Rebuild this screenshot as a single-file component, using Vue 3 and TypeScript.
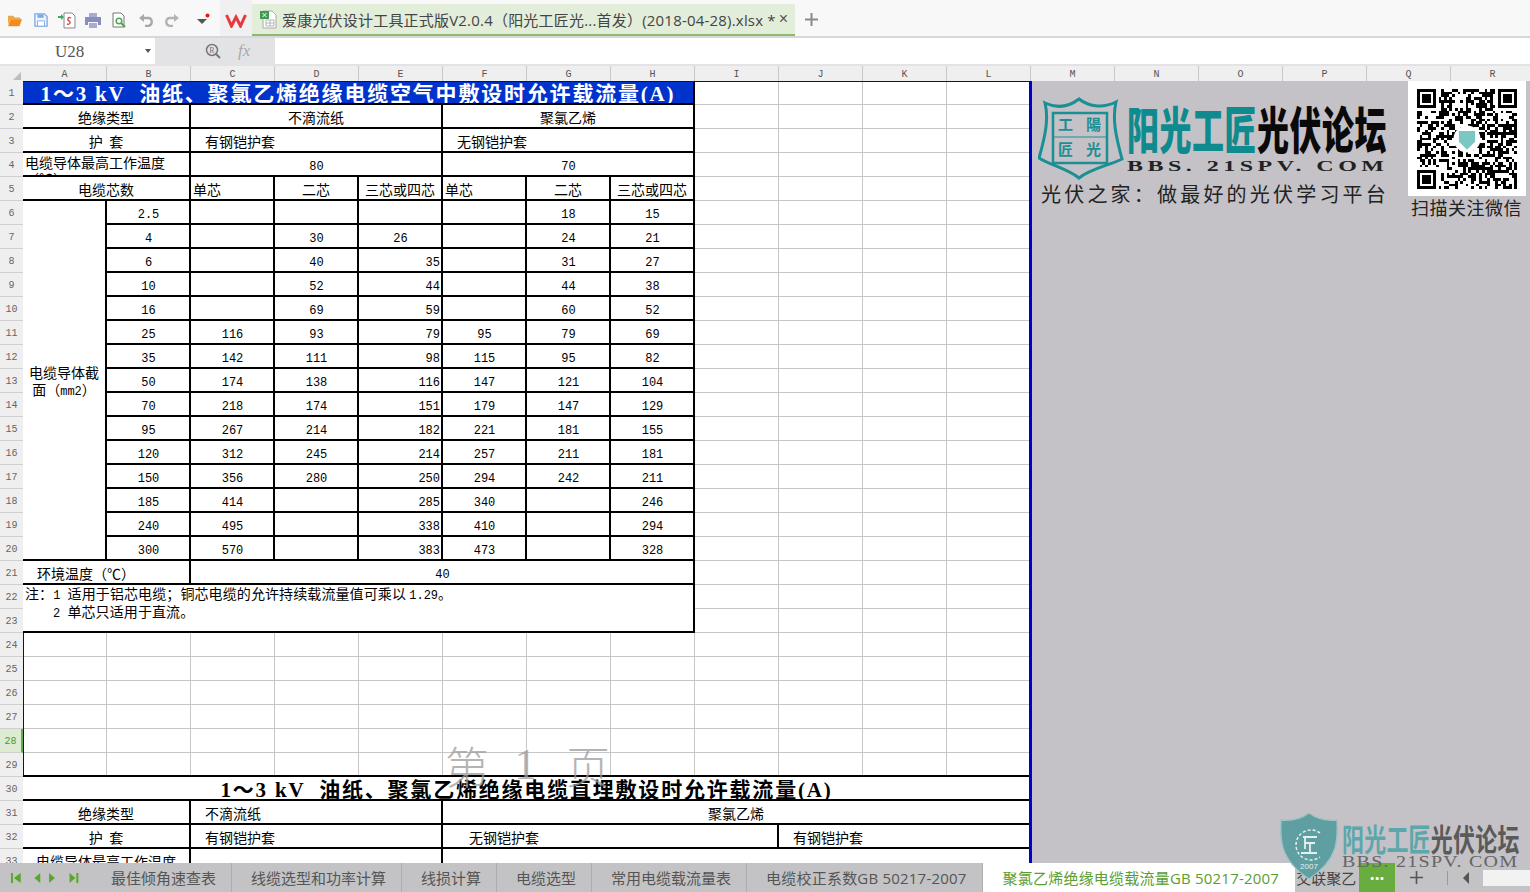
<template>
  <div class="app">
    <!-- title bar -->
    <div class="titlebar">
      <div class="quick">
        <svg class="ico" width="16" height="14" viewBox="0 0 18 16"><path d="M1 3h6l1.500 2H15v2H4L1 13z" fill="#e9a94a"/><path d="M4 7h13l-3 8H1z" fill="#f28a1c"/></svg>
        <svg class="ico" width="14" height="14" viewBox="0 0 16 16"><path d="M1 1h11l3 3v11H1z" fill="#eef4fd" stroke="#7ea9e6" stroke-width="1.500"/><path d="M4 1.500h7v4H4z" fill="#7ea9e6"/><path d="M4 9h8v6H4z" fill="#fff" stroke="#7ea9e6"/></svg>
        <svg class="ico" width="18" height="17" viewBox="0 0 18 17"><path d="M6 1h8l3 3v12H6z" fill="#fff" stroke="#888"/><path d="M13 6c-3-2-4 2-2 3s1 4-2 3" fill="none" stroke="#d9534f" stroke-width="1.500"/><path d="M0 4h3V2l3 3-3 3V6H0z" fill="#41a85f"/></svg>
        <svg class="ico" width="16" height="15" viewBox="0 0 16 15"><path d="M4 0h8v4H4z" fill="#a9abd4"/><path d="M0 4h16v8h-3V9H3v3H0z" fill="#8a8dbf"/><path d="M4 10h8v5H4z" fill="#a9abd4"/></svg>
        <svg class="ico" width="14" height="16" viewBox="0 0 14 16"><path d="M1 1h8l3 3v11H1z" fill="#fff" stroke="#777"/><circle cx="7" cy="9" r="2.800" fill="none" stroke="#4fa64f" stroke-width="1.500"/><path d="M9 11l4 4" stroke="#4fa64f" stroke-width="2"/></svg>
        <svg class="ico" width="14" height="14" viewBox="0 0 14 14"><path d="M3 5h6c5 0 5 7 0 8H6" fill="none" stroke="#a8a8a8" stroke-width="2.400"/><path d="M0 5l5-4v8z" fill="#a8a8a8"/></svg>
        <svg class="ico" width="14" height="14" viewBox="0 0 14 14"><path d="M11 5H5c-5 0-5 7 0 8h3" fill="none" stroke="#b4b4b4" stroke-width="2.400"/><path d="M14 5L9 1v8z" fill="#b4b4b4"/></svg>
        <span class="vsep"></span>
        <svg class="ico" width="16" height="14" viewBox="0 0 16 14"><path d="M1 6h10L6 11z" fill="#555"/><circle cx="11.500" cy="2.500" r="2" fill="#e8141c"/></svg>
      </div>
      <div class="wps">
        <svg width="22" height="15" viewBox="0 0 22 15"><path d="M1.500 2l5 11 4.500-9 4.500 9 5-11" fill="none" stroke="#e6393f" stroke-width="3"/></svg>
      </div>
      <div class="filetab">
        <svg width="17" height="19" viewBox="0 0 17 19"><path d="M3 1h9l4 4v13H3z" fill="#fff" stroke="#aaa"/><path d="M6 10h8v6H6z" fill="none" stroke="#b5b5b5"/><path d="M6 13h8M10 10v6" stroke="#b5b5b5"/><path d="M0 1h9v8H0z" fill="#3f9c4f"/><path d="M2.500 3l4 4M6.500 3l-4 4" stroke="#fff"/></svg>
        <span class="filename">爱康光伏设计工具正式版V2.0.4（阳光工匠光...首发）(2018-04-28).xlsx *</span>
        <span class="tabclose">×</span>
      </div>
      <svg class="newtab" width="15" height="15" viewBox="0 0 15 15"><path d="M7.500 1v13M1 7.500h13" stroke="#8a8a8a" stroke-width="2"/></svg>
    </div>

    <!-- formula bar -->
    <div class="formula">
      <div class="namebox"><span>U28</span><i class="caret"></i></div>
      <div class="fxtools">
        <svg width="16" height="16" viewBox="0 0 16 16"><circle cx="7" cy="7" r="5.500" fill="none" stroke="#777" stroke-width="1.500"/><path d="M11 11l4 4" stroke="#777" stroke-width="2"/><text x="7" y="10" class="rmark">R</text></svg>
        <span class="fx">fx</span>
      </div>
      <div class="fxinput"></div>
    </div>

    <!-- column headers -->
    <div class="colhead">
      <div class="corner"><i></i></div>
      <div v-for="c in columns" :key="c" class="colname">{{ c }}</div>
    </div>

    <div class="body">
      <div class="rowhead">
        <div v-for="r in 33" :key="r" class="rowname" :class="{ cur: r === 28 }">{{ r }}</div>
      </div>
      <div class="page">
        <div
          v-for="(cell, i) in cells"
          :key="i"
          class="cell"
          :class="[cell.cls, 'al-' + (cell.a || 'c')]"
          :style="{ gridColumn: cell.c + ' / span ' + (cell.cs || 1), gridRow: cell.r + ' / span ' + (cell.rs || 1) }"
        >{{ cell.t }}</div>
        <div class="cell section">
          <div>电缆导体截<br />面（<span class="num">mm2</span>）</div>
        </div>
        <div class="cell note">
          <div class="noteline">注：<span class="num">1 </span>适用于铝芯电缆；铜芯电缆的允许持续载流量值可乘以 <span class="num">1.29</span>。</div>
          <div class="noteline note2"><span class="num">2 </span>单芯只适用于直流。</div>
        </div>
        <div class="pagemark"><span>第</span><span class="pm1">1</span><span>页</span></div>
      </div>
      <div class="outside"></div>

      <!-- forum banner sitting on the sheet -->
      <div class="banner">
        <div class="bannertop">
          <svg class="shield" width="86" height="83" viewBox="0 0 86 83">
            <path d="M7 6C20 12 32 9 41 2 50 9 64 12 78 5 74 22 78 40 84 62 72 68 52 72 41 81 30 72 12 68 1 61 7 40 11 22 7 6Z" fill="none" stroke="#1a8f94" stroke-width="3"/>
            <path d="M15 16h54v50H15z" fill="none" stroke="#1a8f94" stroke-width="2.500"/>
            <path d="M15 40h54" stroke="#1a8f94" stroke-width="1"/>
            <text x="20" y="33" class="shieldtxt">工</text><text x="48" y="33" class="shieldtxt">陽</text>
            <text x="20" y="58" class="shieldtxt">匠</text><text x="48" y="58" class="shieldtxt">光</text>
          </svg>
          <div class="brand">
            <div class="brandname"><span class="teal">阳光工匠</span><span>光伏论坛</span></div>
            <div class="brandurl">BBS. 21SPV. COM</div>
          </div>
        </div>
        <div class="slogan">光伏之家：做最好的光伏学习平台</div>
      </div>
      <div class="qrbox">
        <div class="qrcard">
          <svg width="100" height="100" :viewBox="'0 0 ' + qrSize + ' ' + qrSize" shape-rendering="crispEdges">
            <rect v-for="(m, i) in qr" :key="i" :x="m[0]" :y="m[1]" width="1" height="1" fill="#000"/>
            <circle :cx="qrSize / 2" :cy="qrSize / 2" r="5" fill="#fff" shape-rendering="auto"/>
            <path :d="qrLogo" fill="#7cc7c4" shape-rendering="auto"/>
          </svg>
        </div>
        <div class="qrlabel">扫描关注微信</div>
      </div>
    </div>

    <!-- sheet tabs -->
    <div class="tabs">
      <div class="nav">
        <svg width="84" height="12" viewBox="0 0 84 12" fill="#5aa62b">
          <path d="M11 1v10l-7-5zM1 1h2v10H1z"/><path d="M31 1v10l-6-5z"/><path d="M40 1v10l6-5z"/><path d="M61 1v10l6-5zM68 1h2v10h-2z"/>
        </svg>
      </div>
      <div v-for="t in sheetTabs" :key="t" class="sheettab" :class="{ wide: t.includes('GB') }">{{ t }}</div>
      <div class="sheettab active wide">聚氯乙烯绝缘电缆载流量GB 50217-2007</div>
      <div class="clipped">交联聚乙</div>
      <div class="more">···</div>
      <svg class="addsheet" width="15" height="15" viewBox="0 0 15 15"><path d="M7.500 1v13M1 7.500h13" stroke="#555" stroke-width="1.600"/></svg>
      <span class="tabsep"></span>
      <svg class="tabscroll" width="8" height="12" viewBox="0 0 8 12"><path d="M7 0v12L1 6z" fill="#555"/></svg>
      <div class="hscroll"></div>
    </div>

    <!-- watermark stamped over the window -->
    <div class="stamp">
      <svg width="60" height="66" viewBox="0 0 60 66">
        <path d="M2 7C12 8 22 6 30 0 38 6 48 8 58 7 59 26 60 46 30 66 0 46 1 26 2 7Z" fill="#5f9ea1" stroke="#9dc3c5" stroke-width="1.500"/>
        <path d="M41 20a15 15 0 1 0 0 24" fill="none" stroke="#e6f0f0" stroke-width="1.500" stroke-dasharray="3 2"/>
        <path d="M24 24h14M26 24v12M26 30h10M31 30v10M22 40h16" fill="none" stroke="#e6f0f0" stroke-width="1.800"/>
        <text x="30" y="56" class="stampyear">2007</text>
      </svg>
      <div class="stamptext">
        <div class="stampname"><span class="st1">阳光工匠</span><span class="st2">光伏论坛</span></div>
        <div class="stampurl">BBS. 21SPV. COM</div>
      </div>
    </div>
  </div>
</template>

<script setup lang="ts">
interface Cell {
  c: number
  r: number
  cs?: number
  rs?: number
  t: string
  a?: 'l' | 'c' | 'r'
  cls?: string
}

const columns = 'ABCDEFGHIJKLMNOPQR'.split('')

const sheetTabs = ['最佳倾角速查表', '线缆选型和功率计算', '线损计算', '电缆选型', '常用电缆载流量表', '电缆校正系数GB 50217-2007']

const sizes: [string, string[]][] = [
  ['2.5', ['', '', '', '', '18', '15']],
  ['4', ['', '30', '26', '', '24', '21']],
  ['6', ['', '40', '35', '', '31', '27']],
  ['10', ['', '52', '44', '', '44', '38']],
  ['16', ['', '69', '59', '', '60', '52']],
  ['25', ['116', '93', '79', '95', '79', '69']],
  ['35', ['142', '111', '98', '115', '95', '82']],
  ['50', ['174', '138', '116', '147', '121', '104']],
  ['70', ['218', '174', '151', '179', '147', '129']],
  ['95', ['267', '214', '182', '221', '181', '155']],
  ['120', ['312', '245', '214', '257', '211', '181']],
  ['150', ['356', '280', '250', '294', '242', '211']],
  ['185', ['414', '', '285', '340', '', '246']],
  ['240', ['495', '', '338', '410', '', '294']],
  ['300', ['570', '', '383', '473', '', '328']],
]

const cells: Cell[] = [
  { c: 1, r: 1, cs: 8, t: '1～3 kV  油纸、聚氯乙烯绝缘电缆空气中敷设时允许载流量(A)', cls: 'title blue' },
  { c: 1, r: 2, cs: 2, t: '绝缘类型' },
  { c: 3, r: 2, cs: 3, t: '不滴流纸' },
  { c: 6, r: 2, cs: 3, t: '聚氯乙烯' },
  { c: 1, r: 3, cs: 2, t: '护  套' },
  { c: 3, r: 3, cs: 3, t: '有钢铠护套', a: 'l', cls: 'ind' },
  { c: 6, r: 3, cs: 3, t: '无钢铠护套', a: 'l', cls: 'ind' },
  { c: 1, r: 4, cs: 2, t: '电缆导体最高工作温度（℃）', a: 'l', cls: 'wrap' },
  { c: 3, r: 4, cs: 3, t: '80', cls: 'num' },
  { c: 6, r: 4, cs: 3, t: '70', cls: 'num' },
  { c: 1, r: 5, cs: 2, t: '电缆芯数' },
  { c: 3, r: 5, t: '单芯', a: 'l' },
  { c: 4, r: 5, t: '二芯' },
  { c: 5, r: 5, t: '三芯或四芯' },
  { c: 6, r: 5, t: '单芯', a: 'l' },
  { c: 7, r: 5, t: '二芯' },
  { c: 8, r: 5, t: '三芯或四芯' },
  { c: 1, r: 21, cs: 2, t: '环境温度（℃）', a: 'l', cls: 'ind' },
  { c: 3, r: 21, cs: 6, t: '40', cls: 'num' },
  { c: 1, r: 30, cs: 12, t: '1～3 kV  油纸、聚氯乙烯绝缘电缆直埋敷设时允许载流量(A)', cls: 'title second' },
  { c: 1, r: 31, cs: 2, t: '绝缘类型' },
  { c: 3, r: 31, cs: 3, t: '不滴流纸', a: 'l', cls: 'ind' },
  { c: 6, r: 31, cs: 7, t: '聚氯乙烯' },
  { c: 1, r: 32, cs: 2, t: '护  套' },
  { c: 3, r: 32, cs: 3, t: '有钢铠护套', a: 'l', cls: 'ind' },
  { c: 6, r: 32, cs: 4, t: '无钢铠护套', a: 'l', cls: 'ind2' },
  { c: 10, r: 32, cs: 3, t: '有钢铠护套', a: 'l', cls: 'ind' },
  { c: 1, r: 33, cs: 2, t: '电缆导体最高工作温度', cls: 'plain33' },
  { c: 3, r: 33, cs: 3, t: '' },
  { c: 6, r: 33, cs: 7, t: '' },
]

sizes.forEach(([size, vals], i) => {
  const r = 6 + i
  cells.push({ c: 2, r, t: size, cls: 'num' })
  vals.forEach((v, j) => {
    const right = j === 2 && v !== '26'
    cells.push({ c: 3 + j, r, t: v, cls: 'num', a: right ? 'r' : 'c' })
  })
})

// QR code look-alike, modules come from a small LFSR
const qrSize = 37
const qr: [number, number][] = []
let seed = 0x2f6e2b1

const nextBit = () => {
  seed ^= seed << 13
  seed ^= seed >>> 17
  seed ^= seed << 5
  return seed & 1
}

const inFinder = (x: number, y: number) => {
  const n = qrSize
  return (x < 8 && y < 8) || (x >= n - 8 && y < 8) || (x < 8 && y >= n - 8)
}

const finderOn = (x: number, y: number) => {
  const d = Math.max(Math.abs(x - 3), Math.abs(y - 3))
  return d === 3 || d <= 1
}

for (let y = 0; y < qrSize; y++) {
  for (let x = 0; x < qrSize; x++) {
    const b = nextBit()
    if (inFinder(x, y)) {
      const fx = x >= qrSize - 8 ? x - (qrSize - 7) : x
      const fy = y >= qrSize - 8 ? y - (qrSize - 7) : y
      if (fx >= 0 && fy >= 0 && fx < 7 && fy < 7 && finderOn(fx, fy)) qr.push([x, y])
    } else if (b) {
      qr.push([x, y])
    }
  }
}

const mid = qrSize / 2
const qrLogo = `M${mid - 3} ${mid - 3}h6v4l-3 3-3-3z`
</script>

<style>
html,
body {
  margin: 0;
  background: #c4c2c6;
}
</style>

<style scoped>
.app {
  position: relative;
  width: 1530px;
  height: 892px;
  overflow: hidden;
  display: flex;
  flex-direction: column;
  font-family: "Liberation Serif", "Noto Sans CJK SC", serif;
  color: #000;
}

.titlebar {
  height: 36px;
  border-bottom: 2px solid #d8d8dc;
  background: #f8f8f8;
  display: flex;
  align-items: stretch;
  flex: none;
}

.quick {
  position: relative;
  width: 220px;
  flex: none;
  display: flex;
  align-items: center;
  padding: 4px 0 0 7px;
  box-sizing: border-box;
}

.ico {
  margin-right: 11px;
  flex: none;
}

.ico:nth-of-type(2) { margin-right: 10px; }
.ico:nth-of-type(3) { margin-right: 9px; }
.ico:nth-of-type(5) { margin-right: 13px; }
.ico:nth-of-type(6) { margin-right: 12px; }
.ico:nth-of-type(7) { margin-right: 8px; }

.vsep {
  width: 1px;
  height: 28px;
  background: #d0d0d0;
  margin-right: 9px;
}

.wps {
  width: 32px;
  background: #f0f0f0;
  display: flex;
  align-items: center;
  justify-content: center;
  padding-top: 4px;
  box-sizing: border-box;
}

.filetab {
  margin-top: 4px;
  width: 543px;
  background: #e2edda;
  border-bottom: 2px solid #8cbb6e;
  box-sizing: border-box;
  display: flex;
  align-items: center;
  padding-left: 8px;
  flex: none;
}

.filename {
  margin-left: 5px;
  font-family: "Open Sans", "Noto Sans CJK SC", sans-serif;
  font-size: 15px;
  color: #444;
  white-space: nowrap;
  letter-spacing: 0.2px;
}

.tabclose {
  margin-left: 3px;
  font-family: "Liberation Sans", sans-serif;
  font-size: 16px;
  color: #555;
}

.newtab {
  align-self: center;
  margin: 3px 0 0 9px;
}

.formula {
  height: 28px;
  flex: none;
  background: #e3e3e5;
  box-sizing: border-box;
  padding-bottom: 2px;
  display: flex;
}

.namebox {
  width: 155px;
  background: #fff;
  position: relative;
  font-size: 17px;
  color: #555;
  font-family: "Liberation Serif", serif;
  display: flex;
  align-items: center;
  padding: 2px 0 0 55px;
  box-sizing: border-box;
}

.caret {
  position: absolute;
  left: 145px;
  top: 11px;
  border: 3px solid transparent;
  border-top: 4px solid #555;
}

.fxtools {
  width: 120px;
  display: flex;
  align-items: center;
  padding-left: 50px;
  box-sizing: border-box;
}

.rmark {
  font-size: 8px;
  text-anchor: middle;
  fill: #777;
}

.fx {
  margin-left: 17px;
  font-style: italic;
  font-size: 17px;
  color: #aaa;
  font-family: "Liberation Serif", serif;
}

.fxinput {
  flex: 1;
  background: #fff;
}

.colhead {
  height: 15px;
  flex: none;
  display: flex;
  background: #efefef;
}

.corner {
  width: 23px;
  position: relative;
  flex: none;
}

.corner i {
  position: absolute;
  right: 2px;
  bottom: 1px;
  border-style: solid;
  border-width: 0 0 8px 8px;
  border-color: transparent transparent #bcbcbc transparent;
}

.colname {
  width: 84px;
  flex: none;
  box-sizing: border-box;
  border-right: 1px solid #c8c8c8;
  text-align: center;
  font-size: 10px;
  line-height: 17px;
  color: #555;
  font-family: "Liberation Mono", monospace;
  overflow: hidden;
}

.body {
  flex: 1;
  min-height: 0;
  position: relative;
  display: flex;
  overflow: hidden;
}

.rowhead {
  width: 23px;
  flex: none;
  background: #efefef;
}

.rowname {
  height: 24px;
  box-sizing: border-box;
  border-bottom: 1px solid #cfcfcf;
  text-align: center;
  line-height: 25px;
  font-size: 10px;
  font-family: "Liberation Mono", monospace;
  color: #666;
}

.rowname.cur {
  background: #dcebd2;
  border-right: 2px solid #6aa84f;
  color: #4b9a2e;
}

.page {
  position: relative;
  width: 1009px;
  flex: none;
  display: grid;
  grid-template-columns: repeat(12, 84px);
  grid-template-rows: repeat(33, 24px);
  background-color: #fff;
  background-image:
    repeating-linear-gradient(to right, transparent 0 83px, #c6c6c6 83px 84px),
    repeating-linear-gradient(to bottom, transparent 0 23px, #c6c6c6 23px 24px);
  box-shadow: inset 1px 1px 0 #0000c8;
}

.page::after {
  content: "";
  position: absolute;
  top: 0;
  bottom: 0;
  right: 0;
  width: 3px;
  background: #0000c8;
}

.outside {
  flex: 1;
  background: #c4c2c6;
}

.cell {
  box-sizing: border-box;
  background: #fff;
  border-right: 2px solid #000;
  border-bottom: 2px solid #000;
  font-family: "Noto Sans CJK SC", sans-serif;
  font-size: 14px;
  line-height: 20px;
  padding-top: 2px;
  overflow: hidden;
  white-space: pre;
  min-width: 0;
}

.al-l { text-align: left; padding-left: 2px; }
.al-c { text-align: center; }
.al-r { text-align: right; padding-right: 1px; }

.ind { padding-left: 14px; }
.ind2 { padding-left: 26px; }

.num {
  font-family: "Liberation Mono", monospace;
  font-size: 12px;
}

.cell.num {
  padding-top: 4px;
}

.cell.num.al-c {
  padding-left: 1px;
}

.wrap {
  white-space: normal;
  line-height: 16px;
  padding-top: 1px;
}

.section {
  grid-column: 1;
  grid-row: 6 / span 15;
  white-space: nowrap;
  display: flex;
  align-items: center;
  justify-content: center;
  text-align: center;
  line-height: 17px;
  padding: 4px 0 0;
}

.plain33 {
  line-height: 24px;
  padding-top: 0;
}

.title {
  font-family: "Liberation Serif", "Noto Sans CJK SC", serif;
  font-weight: 700;
  font-size: 21px;
  line-height: 24px;
  padding-top: 0;
  letter-spacing: 1.8px;
}

.blue {
  background: #0033cc;
  color: #fff;
  margin-top: 1px;
}

.second {
  box-shadow: 0 -2px 0 #000;
  padding-top: 1px;
  overflow: hidden;
  border-right: none;
  margin-right: 1px;
}

.note {
  grid-column: 1 / span 8;
  grid-row: 22 / span 2;
  padding: 0 0 0 2px;
  font-size: 14px;
}

.noteline {
  height: 18px;
  line-height: 17px;
  letter-spacing: 0.1px;
}

.noteline .num {
  letter-spacing: 0;
}

.note2 {
  padding-left: 28px;
}

.pagemark {
  position: absolute;
  left: 422px;
  top: 654px;
  width: 165px;
  display: flex;
  justify-content: space-between;
  font-family: "Noto Sans CJK SC", sans-serif;
  font-weight: 300;
  font-size: 44px;
  line-height: 60px;
  color: #9c9c9c;
  opacity: 0.75;
}

.pm1 {
  font-family: "Liberation Serif", serif;
  margin-left: -4px;
}

.banner {
  position: absolute;
  left: 1038px;
  top: 16px;
  width: 356px;
}

.bannertop {
  display: flex;
  gap: 3px;
}

.shield {
  flex: none;
}

.shieldtxt {
  font-family: "Noto Sans CJK SC", sans-serif;
  font-weight: 700;
  font-size: 15px;
  fill: #1a8f94;
}

.brand {
  padding-top: 4px;
}

.brandname {
  font-family: "Noto Sans CJK SC", sans-serif;
  font-weight: 900;
  font-size: 32px;
  line-height: 52px;
  height: 52px;
  white-space: nowrap;
  color: #0a0a0a;
  transform: scaleY(1.55);
  transform-origin: 50% 50%;
  letter-spacing: 0.5px;
}

.teal {
  color: #0f8a8f;
}

.brandurl {
  margin-top: 6px;
  font-family: "Liberation Serif", serif;
  font-weight: 700;
  font-size: 15px;
  line-height: 15px;
  letter-spacing: 2.800px;
  color: #222;
  white-space: nowrap;
  transform: scaleX(1.6);
  transform-origin: 0 50%;
}

.slogan {
  margin: 2px 0 0 3px;
  font-family: "Noto Sans CJK SC", sans-serif;
  font-size: 20px;
  line-height: 24px;
  letter-spacing: 3.200px;
  color: #222;
  white-space: nowrap;
}

.qrbox {
  position: absolute;
  left: 1408px;
  top: 0;
  width: 118px;
}

.qrcard {
  background: #fff;
  height: 115px;
  display: flex;
  align-items: center;
  justify-content: center;
}

.qrlabel {
  margin: -1px 0 0 3px;
  font-family: "Noto Sans CJK SC", sans-serif;
  font-size: 18px;
  line-height: 24px;
  letter-spacing: 0.5px;
  color: #222;
  white-space: nowrap;
}

.tabs {
  height: 29px;
  flex: none;
  background: #c3c3c5;
  display: flex;
  align-items: stretch;
  font-family: "Open Sans", "Noto Sans CJK SC", sans-serif;
  font-size: 15px;
  color: #555;
}

.nav {
  width: 92px;
  flex: none;
  display: flex;
  align-items: center;
  padding-left: 10px;
  box-sizing: border-box;
}

.sheettab {
  box-sizing: border-box;
  padding: 0 15px 0 19px;
  border-right: 1px solid #aeaeb0;
  line-height: 31px;
  white-space: nowrap;
  flex: none;
}

.sheettab.wide {
  letter-spacing: 0.21px;
}

.sheettab.active {
  background: #fff;
  color: #5a9e2f;
  padding: 0 16px 0 20px;
  border-right: none;
}

.clipped {
  width: 62px;
  overflow: hidden;
  white-space: nowrap;
  line-height: 31px;
  color: #444;
  flex: none;
  box-sizing: border-box;
  padding-left: 1px;
}

.more {
  width: 36px;
  margin-left: 2px;
  flex: none;
  background: #6aad3f;
  color: #fff;
  text-align: center;
  line-height: 31px;
  font-weight: 700;
  font-size: 17px;
}

.addsheet {
  align-self: center;
  margin-left: 14px;
  flex: none;
}

.tabsep {
  width: 1px;
  height: 14px;
  background: #999;
  align-self: center;
  margin-left: 23px;
}

.tabscroll {
  align-self: center;
  margin-left: 14px;
}

.hscroll {
  flex: 1;
  margin: 7px 0 6px 13px;
  background: #f2f2f2;
}

.stamp {
  position: absolute;
  left: 1279px;
  top: 813px;
  display: flex;
  gap: 3px;
  pointer-events: none;
}

.stampyear {
  font-family: "Liberation Sans", sans-serif;
  font-size: 8px;
  fill: #e6f0f0;
  text-anchor: middle;
}

.stamptext {
  padding-top: 8px;
}

.stampname {
  font-family: "Noto Sans CJK SC", sans-serif;
  font-weight: 700;
  font-size: 22px;
  line-height: 32px;
  height: 34px;
  white-space: nowrap;
  transform: scaleY(1.4);
  letter-spacing: 0.2px;
}

.st1 {
  color: #5ca7ab;
}

.st2 {
  color: #5a5a5a;
}

.stampurl {
  font-family: "Liberation Serif", serif;
  font-size: 16px;
  line-height: 14px;
  letter-spacing: 1px;
  color: #666;
  white-space: nowrap;
  transform: scaleX(1.25);
  transform-origin: 0 50%;
}
</style>
